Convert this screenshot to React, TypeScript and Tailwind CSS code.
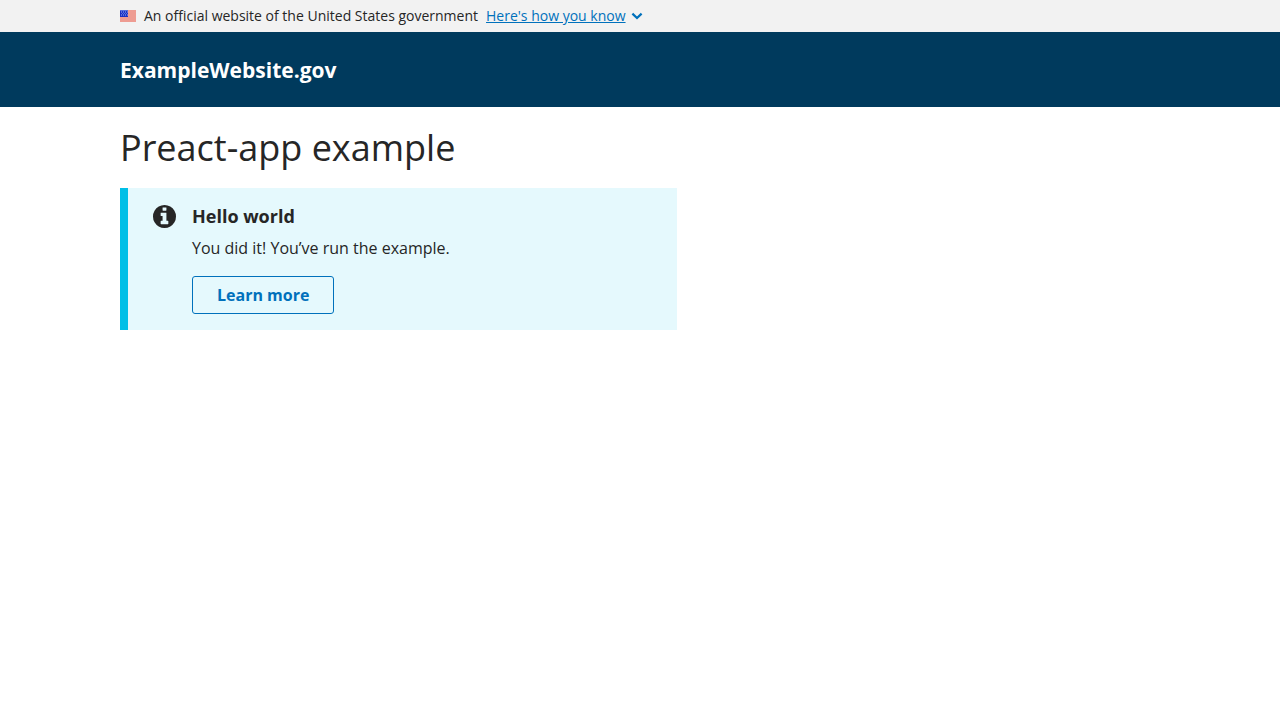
import React from "react";

function Flag() {
  return (
    <svg className="h-3 w-4 shrink-0" viewBox="0 0 16 12" aria-hidden="true" shapeRendering="crispEdges">
      <rect width="16" height="12" fill="#ee9c92" />
      <rect width="8" height="7" fill="#1c30c4" />
      <path d="M0 0h8v1H0zM1 1h1v2H1zM3 1h1v2H3zM5 1h1v2H5zM7 1h1v2H7zM2 3h1v1H2zM4 3h1v1H4zM6 3h1v1H6zM1 4h1v2H1zM3 4h1v2H3zM5 4h1v2H5zM7 4h1v2H7z" fill="#5a70dc" />
    </svg>
  );
}

function InfoIcon() {
  return (
    <svg className="h-6 w-6 shrink-0" viewBox="62 62 1602 1602" fill="currentColor" aria-hidden="true">
      <path d="M1152 1376v-160q0-14-9-23t-23-9h-96v-512q0-14-9-23t-23-9h-320q-14 0-23 9t-9 23v160q0 14 9 23t23 9h96v320h-96q-14 0-23 9t-9 23v160q0 14 9 23t23 9h448q14 0 23-9t9-23zm-128-896v-160q0-14-9-23t-23-9h-192q-14 0-23 9t-9 23v160q0 14 9 23t23 9h192q14 0 23-9t9-23zm640 416q0 209-103 385.5t-279.5 279.5-385.5 103-385.5-103-279.5-279.5-103-385.5 103-385.5 279.5-279.5 385.5-103 385.5 103 279.5 279.5 103 385.5z" />
    </svg>
  );
}

export default function App() {
  return (
    <div className="font-['Open_Sans',sans-serif] text-base text-[#262626]">
      <div className="bg-[#f2f2f2]">
        <div className="mx-auto flex h-8 max-w-[1040px] items-center text-sm">
          <Flag />
          <p className="ml-2">An official website of the United States government</p>
          <button type="button" aria-expanded="false" className="ml-2 flex items-center text-[#0071bc]">
            <span className="underline">Here's how you know</span>
            <svg className="ml-[5px] h-3 w-3" viewBox="0 0 12 12" fill="none" stroke="currentColor" strokeWidth="2.2" aria-hidden="true">
              <path d="M1.4 3.6 6 8 10.6 3.6" />
            </svg>
          </button>
        </div>
      </div>
      <header className="bg-[#003a5d]">
        <div className="mx-auto flex max-w-[1040px] items-center pt-6 pb-[23px]">
          <a href="#home" className="text-[21px] leading-7 font-bold text-white">ExampleWebsite.gov</a>
        </div>
      </header>
      <main className="mx-auto max-w-[1040px] pt-4">
        <h1 className="mb-4 text-4xl leading-[49px]">Preact-app example</h1>
        <section className="flex w-[557px] max-w-full gap-4 border-l-8 border-[#00bfe7] bg-[#e5f9fd] py-4 pr-4 pl-6">
          <InfoIcon />
          <div>
            <h2 className="text-lg leading-6 font-bold">Hello world</h2>
            <p className="mt-2 leading-6">You did it! You’ve run the example.</p>
            <button type="button" className="mt-4 h-[38px] rounded-[3px] border border-[#0071bc] px-6 font-bold text-[#0071bc]">Learn more</button>
          </div>
        </section>
      </main>
    </div>
  );
}
